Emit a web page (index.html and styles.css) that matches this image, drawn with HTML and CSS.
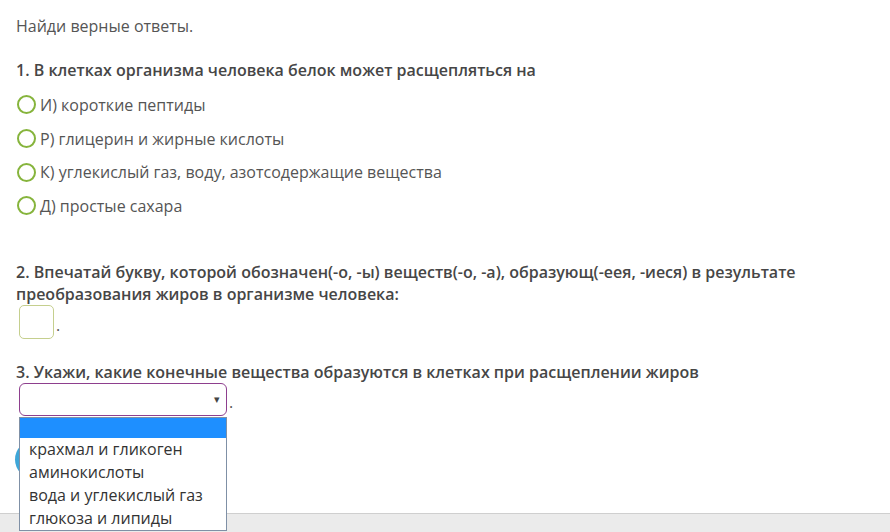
FILE: index.html
```html
<!DOCTYPE html>
<html lang="ru">
<head>
    <meta charset="UTF-8">
    <title>Тест</title>
    <link rel="stylesheet" href="styles.css">
</head>
<body>

<div class="page">
    <p class="intro">Найди верные ответы.</p>

    <div class="question q1">
        <p class="q-title">1. В клетках организма человека белок может расщепляться на</p>
        <ul class="options">
            <li><span class="radio"></span>И) короткие пептиды</li>
            <li><span class="radio"></span>Р) глицерин и жирные кислоты</li>
            <li><span class="radio"></span>К) углекислый газ, воду, азотсодержащие вещества</li>
            <li><span class="radio"></span>Д) простые сахара</li>
        </ul>
    </div>

    <div class="question q2">
        <p class="q-title">2. Впечатай букву, которой обозначен(-о, -ы) веществ(-о, -а), образующ(-еея, -иеся) в результате преобразования жиров в организме человека:</p>
        <div class="answer-row">
            <span class="letter-input"></span><span class="dot">.</span>
        </div>
    </div>

    <div class="question q3">
        <p class="q-title">3. Укажи, какие конечные вещества образуются в клетках при расщеплении жиров</p>
        <div class="answer-row">
            <div class="select-wrap">
                <div class="select"><span class="arrow">&#9662;</span></div>
                <ul class="dropdown">
                    <li class="selected">&nbsp;</li>
                    <li>крахмал и гликоген</li>
                    <li>аминокислоты</li>
                    <li>вода и углекислый газ</li>
                    <li>глюкоза и липиды</li>
                </ul>
            </div>
            <span class="dot">.</span>
        </div>
    </div>

    <button class="check-button" aria-label="Проверить"></button>
</div>

<div class="bottom-bar"></div>

</body>
</html>
```

FILE: styles.css
```css
body {
    margin: 0;
    height: 532px;
    display: flex;
    flex-direction: column;
    overflow: hidden;
    font-family: "Open Sans", "Liberation Sans", sans-serif;
    font-size: 16px;
    line-height: 22px;
    color: #555;
    background: #fff;
}
.page {
    flex: 1;
    padding: 15px 16px 0 16px;
}
p {
    margin: 0;
}
.intro {
    margin-bottom: 22px;
}
.q-title {
    font-weight: 600;
    color: #464646;
}
.options {
    list-style: none;
    margin: 7px 0 0 0;
    padding: 0;
}
.options li {
    display: flex;
    align-items: center;
    height: 33.7px;
}
.radio {
    width: 15px;
    height: 15px;
    border: 2px solid #86b43c;
    border-radius: 50%;
    margin: 0 4px 0 1px;
}
.q2 {
    margin-top: 38px;
}
.answer-row {
    display: flex;
    align-items: flex-end;
    padding-left: 3px;
}
.letter-input {
    width: 33px;
    height: 32px;
    border: 1px solid #c5cf8e;
    border-radius: 5px;
}
.dot {
    margin-left: 2px;
    line-height: 20px;
    margin-bottom: 4px;
}
.q3 {
    margin-top: 22px;
}
.select-wrap {
    position: relative;
    z-index: 2;
}
.select {
    width: 206px;
    height: 31px;
    border: 1px solid #8e3f8e;
    border-radius: 6px;
    display: flex;
    align-items: center;
    justify-content: flex-end;
}
.arrow {
    font-size: 11px;
    color: #444;
    margin-right: 6px;
}
.dropdown {
    position: absolute;
    top: 34px;
    left: 0;
    width: 206px;
    list-style: none;
    margin: 0;
    padding: 0;
    background: #fff;
    border: 1px solid #7f90a6;
    color: #333;
}
.dropdown li {
    height: 23px;
    line-height: 23px;
    padding-left: 9px;
}
.dropdown li.selected {
    background: #1e8fff;
    height: 20px;
}
.check-button {
    margin-top: 24px;
    margin-left: -1px;
    width: 120px;
    height: 39px;
    border: none;
    border-radius: 20px;
    background: #3ea6d8;
}
.bottom-bar {
    height: 18px;
    background: #ebebeb;
    border-top: 1px solid #cfcfcf;
}
```
